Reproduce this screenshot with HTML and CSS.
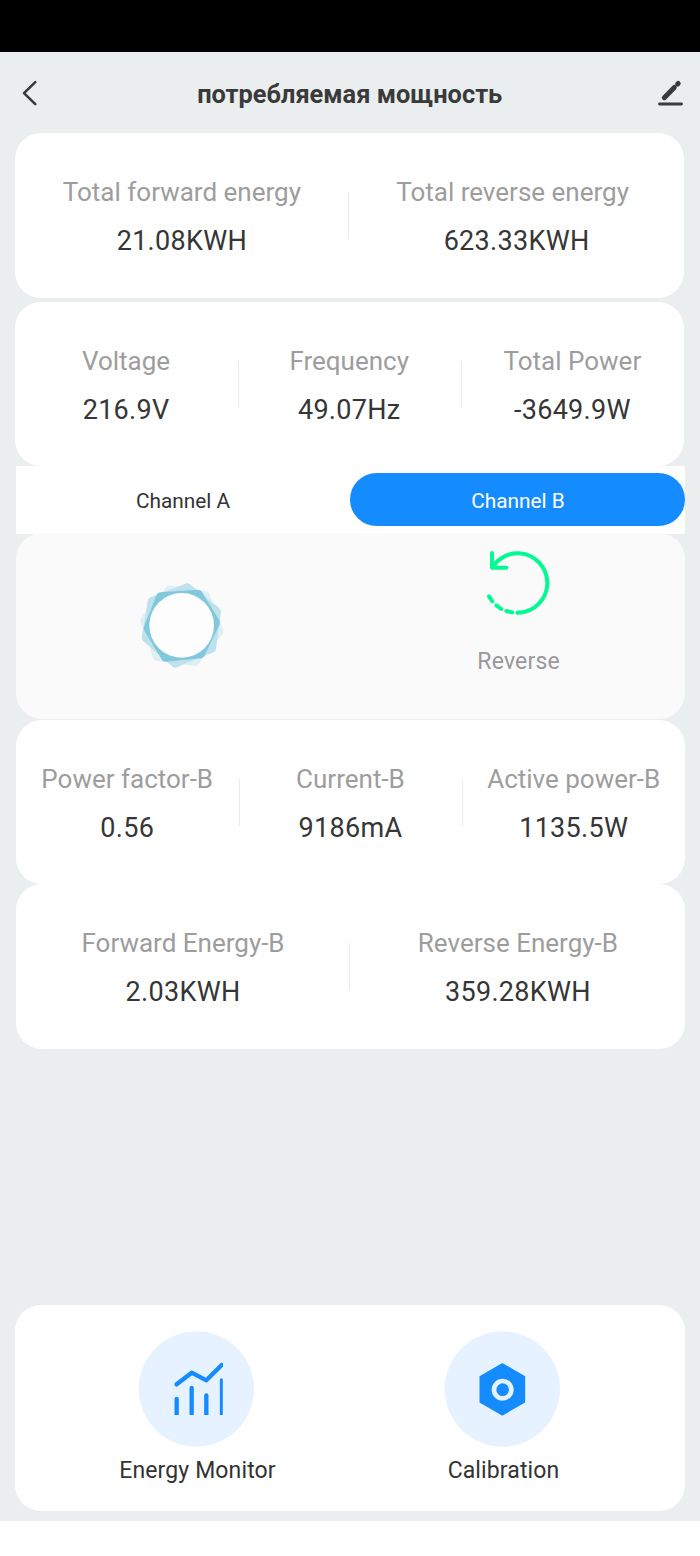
FILE: index.html
```html
<!DOCTYPE html>
<html lang="ru">
<head>
<meta charset="utf-8">
<title>потребляемая мощность</title>
<link rel="stylesheet" href="styles.css">
</head>
<body>
<div class="status-bar"></div>
<div class="screen">
  <header class="header">
    <svg class="back" width="40" height="40" viewBox="0 0 40 40"><path d="M25.3 9.1 14 20.1 25.3 31.1"/></svg>
    <h1 class="title">потребляемая мощность</h1>
    <svg class="edit" width="40" height="40" viewBox="0 0 40 40"><path class="pen" d="M14.3 24.7 24.3 14.5"/><path class="pen" d="M27.6 11 28.2 10.4"/><path class="base" d="M9.5 31H31.5"/></svg>
  </header>

  <main class="content">
    <section class="card first">
      <div class="metric"><span class="label">Total forward energy</span><span class="value">21.08KWH</span></div>
      <div class="metric"><span class="label wide">Total reverse energy</span><span class="value">623.33KWH</span></div>
    </section>
    <section class="card second">
      <div class="metric"><span class="label">Voltage</span><span class="value">216.9V</span></div>
      <div class="metric"><span class="label">Frequency</span><span class="value">49.07Hz</span></div>
      <div class="metric"><span class="label">Total Power</span><span class="value">-3649.9W</span></div>
    </section>

    <div class="channel">
      <nav class="tabs">
        <div class="tab">Channel A</div>
        <div class="tab active">Channel B</div>
      </nav>
      <section class="flow">
        <div class="orb">
          <svg width="130" height="130" viewBox="0 0 390 390">
            <path class="layer faint" d="M152 88 260 106 301 215 228 306 114 290 76 181Z"/>
            <path class="layer mid" d="M205 82 294 154 279 266 169 311 80 234 98 124Z"/>
            <path class="layer deep" d="M124 109 238 101 291 188 245 283 139 293 86 205Z"/>
            <circle cx="188" cy="196" r="97" fill="#fdfdfd"/>
          </svg>
        </div>
        <div class="direction">
          <svg width="120" height="90" viewBox="0 0 360 270">
            <path d="M175 248A89 89 0 1 0 101 111M99 69V113H142"/>
            <path d="M90 199 100 214M112 226 127 237M142 243 160 247"/>
          </svg>
          <span class="direction-name">Reverse</span>
        </div>
      </section>
      <section class="card third">
        <div class="metric"><span class="label">Power factor-B</span><span class="value">0.56</span></div>
        <div class="metric"><span class="label">Current-B</span><span class="value">9186mA</span></div>
        <div class="metric"><span class="label">Active power-B</span><span class="value">1135.5W</span></div>
      </section>
      <section class="card">
        <div class="metric"><span class="label">Forward Energy-B</span><span class="value">2.03KWH</span></div>
        <div class="metric"><span class="label">Reverse Energy-B</span><span class="value">359.28KWH</span></div>
      </section>
    </div>
  </main>

  <footer class="actions">
    <div class="action">
      <svg width="116" height="116" viewBox="0 0 348 348">
        <circle cx="175" cy="174" r="173"/>
        <clipPath id="chart"><path d="M100 80H255V252H100Z"/></clipPath>
        <g class="chart" clip-path="url(#chart)">
          <path d="M116 160 161 125 205 148 251 102M116 204V260M161 171V260M205 193V260"/>
          <path class="thin" d="M250 146V260"/>
        </g>
      </svg>
      <span class="action-name">Energy Monitor</span>
    </div>
    <div class="action">
      <svg width="116" height="116" viewBox="0 0 348 348">
        <circle cx="175" cy="174" r="173"/>
        <path class="nut" d="M175 99 241 137V213L175 251 109 213V137Z"/>
        <circle class="ring" cx="176" cy="176" r="26"/>
      </svg>
      <span class="action-name">Calibration</span>
    </div>
  </footer>
</div>
</body>
</html>
```
FILE: styles.css
```css
* { box-sizing: border-box; }
body {
  margin: 0;
  height: 1556px;
  background: #fff;
  font-family: Roboto, "Noto Sans", sans-serif;
  color: #333;
}
.status-bar { height: 52px; background: #000; }
.screen {
  display: flex;
  flex-direction: column;
  height: 1469px;
  padding: 0 15px 10px;
  background: #eaeeef;
}
.header {
  display: flex;
  align-items: center;
  justify-content: space-between;
  height: 81.3px;
  margin: 0 -4.5px 0 -5px;
}
.header svg { fill: none; stroke: #3a3a3a; }
.back { stroke-width: 2.6; stroke-linecap: round; stroke-linejoin: round; }
.pen { stroke-width: 5; stroke-linecap: round; }
.base { stroke-width: 2.8; stroke-linecap: round; }
.title { margin: 3px 0 0; font-size: 25.4px; font-weight: 700; line-height: 30px; color: #3a3a3a; white-space: nowrap; }

.card {
  display: flex;
  height: 164.5px;
  padding-top: 41px;
  background: #fff;
  border-radius: 26px;
}
.first { height: 165px; margin-bottom: 3.4px; }
.first, .second { margin-right: .6px; }
.first .metric, .second .metric { right: .5px; }
.second { height: 164.3px; }
.third { margin-top: 1px; }
.metric {
  position: relative;
  display: flex;
  flex: 1 1 0;
  flex-direction: column;
  align-items: center;
  gap: 13px;
  line-height: 36px;
  white-space: nowrap;
}
.metric + .metric::before {
  content: "";
  position: absolute;
  left: -1px;
  top: 18px;
  width: 1px;
  height: 47px;
  background: #eaeaea;
}
.second .metric + .metric::before { left: 0; }
.third .metric + .metric::before { left: 0; }
.label { font-size: 26px; color: #9d9d9d; }
.wide { padding-right: 8px; }
.value { font-size: 27px; letter-spacing: .3px; color: #363636; }

.channel { margin-left: .6px; margin-right: -.3px; }
.tabs { display: flex; height: 68px; padding: 7px 0 7.5px; background: #fff; }
.tab {
  flex: 1;
  border-radius: 27px;
  text-align: center;
  font-size: 20.8px;
  line-height: 56px;
}
.active { background: #148cff; color: #fff; }
.flow {
  display: flex;
  height: 186px;
  margin-top: -1px;
  background: #fafafa;
  border-radius: 26px;
}
.orb, .direction { flex: 1; display: flex; flex-direction: column; align-items: center; }
.orb { padding: 27px 0 0 2px; }
.direction { padding-left: 1px; }
.layer { stroke-width: 24; stroke-linejoin: round; }
.deep { fill: #82c8dc; stroke: #82c8dc; }
.mid { fill: #bee2eb; stroke: #bee2eb; }
.faint { fill: #dff0f4; stroke: #dff0f4; }
.direction svg { margin-top: -3px; fill: none; stroke: #00fa92; stroke-width: 12; stroke-linecap: round; stroke-linejoin: round; }
.direction-name { margin-top: 27px; font-size: 23px; line-height: 30px; letter-spacing: .2px; color: #999; }

.actions {
  display: flex;
  height: 206px;
  margin-top: auto;
  padding: 26px 30px 0 28px;
  background: #fff;
  border-radius: 26px;
}
.action { flex: 1; display: flex; flex-direction: column; align-items: center; gap: 9px; }
.action > svg { overflow: visible; }
.action > svg > circle { fill: #e6f2ff; }
.chart { fill: none; stroke: #148cff; stroke-width: 13; stroke-linecap: round; stroke-linejoin: round; }
.thin { stroke-width: 9; }
.nut { fill: #148cff; stroke: #148cff; stroke-width: 5; stroke-linejoin: round; }
.action > svg > .ring { fill: #148cff; stroke: #e6f2ff; stroke-width: 14; }
.action-name { padding-left: 3px; font-size: 23px; line-height: 30px; letter-spacing: .12px; }
```
